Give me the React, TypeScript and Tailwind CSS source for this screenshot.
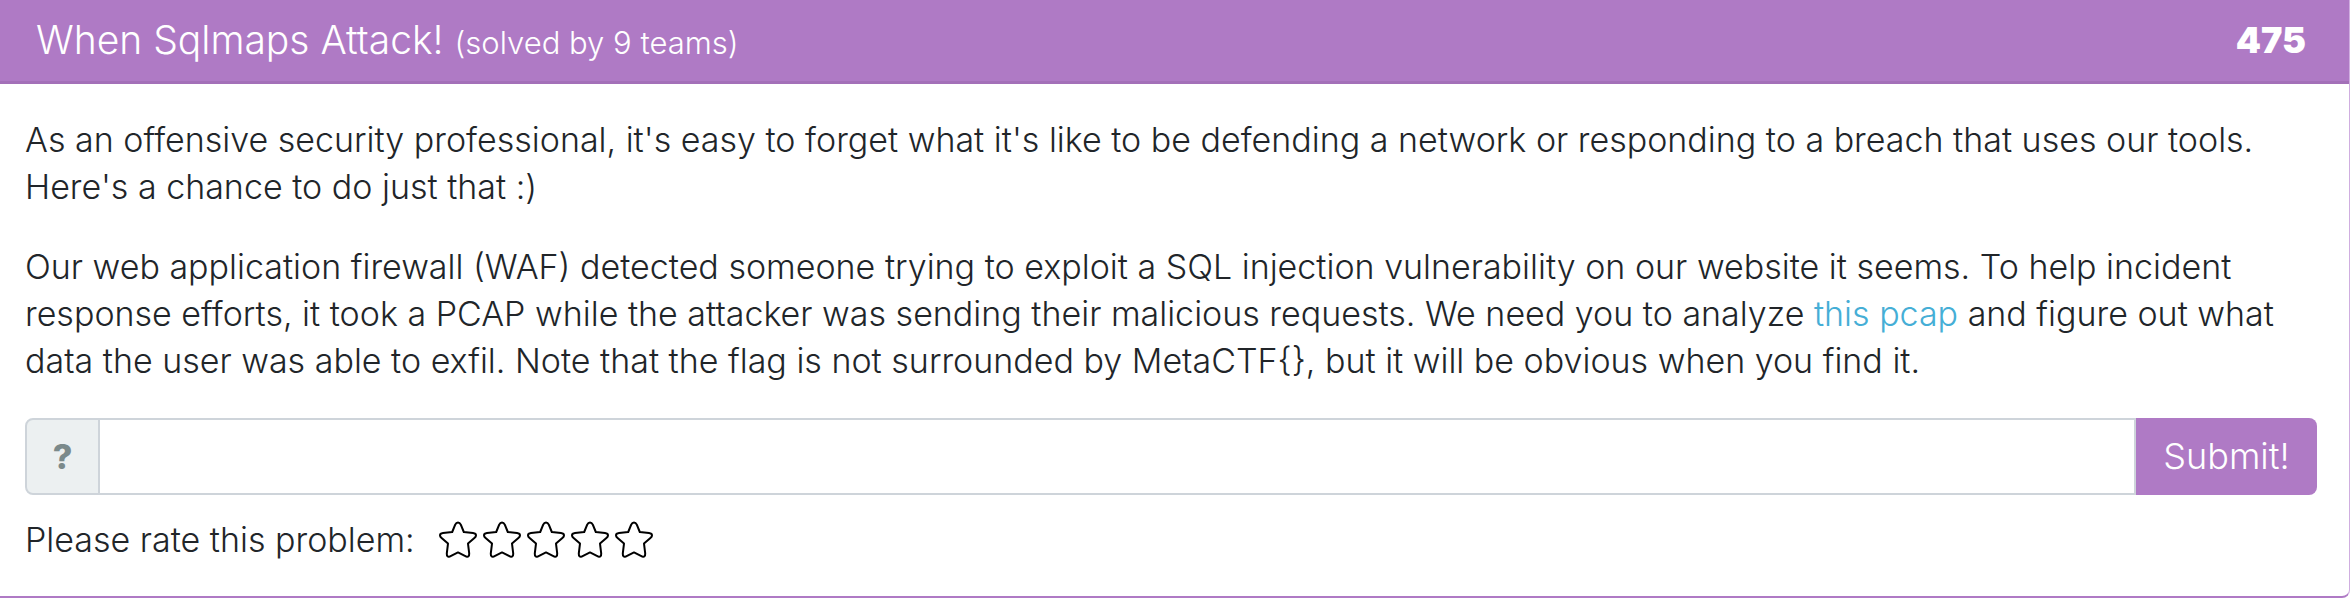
import { useState } from "react";

const STAR =
  "M19 1.5 Q20.8 1.5 21.8 3.6 L24.8 11 L34 12 Q37 12.4 37 14.4 Q37 15.6 35.4 17 L29 22.6 L30.2 32.4 Q30.3 36.4 27.4 35.6 L19 31.4 L10.6 35.6 Q7.7 36.4 7.8 32.4 L9 22.6 L2.6 17 Q1 15.6 1 14.4 Q1 12.4 4 12 L13.2 11 L16.2 3.6 Q17.2 1.5 19 1.5 Z";

function Rating() {
  const [rating, setRating] = useState(0);
  return (
    <div className="flex gap-[6px]">
      {[1, 2, 3, 4, 5].map((n) => (
        <button key={n} type="button" aria-label={`${n} stars`} onClick={() => setRating(n)}>
          <svg
            className="block h-[38px] w-[38px]"
            viewBox="0 0 38 38"
            fill={n <= rating ? "#000" : "none"}
            stroke="#000"
            strokeWidth="2"
            strokeLinejoin="round"
          >
            <path d={STAR} />
          </svg>
        </button>
      ))}
    </div>
  );
}

export default function App() {
  return (
    <div className="min-h-screen bg-white pb-[6px] font-['Inter',sans-serif] text-[34px] leading-[47px] font-light text-[#212529]">
      <section className="rounded-br-[8px] border-r border-b-2 border-r-[#d0aee0] border-b-[#af7ac5]">
        <header className="flex items-center justify-between border-b-[3px] border-[#a370b8] bg-[#af7ac5] pt-4 pr-[43px] pb-[17px] pl-9 text-white">
          <h1 className="text-[39px] leading-[48px]">
            When Sqlmaps Attack! <span className="text-[31px] leading-none">(solved by 9 teams)</span>
          </h1>
          <span className="text-[36px] leading-[48px] font-black">475</span>
        </header>
        <div className="pt-8 pr-8 pb-[33px] pl-[25px]">
          <p className="mb-[33px]">
            As an offensive security professional, it's easy to forget what it's like to be defending a network or
            responding to a breach that uses our tools. Here's a chance to do just that :)
          </p>
          <p className="mb-[34px]">
            Our web application firewall (WAF) detected someone trying to exploit a SQL injection vulnerability on our
            website it seems. To help incident response efforts, it took a PCAP while the attacker was sending their
            malicious requests. We need you to analyze{" "}
            <a href="#pcap" className="text-[#45aed6]">
              this pcap
            </a>
            {
              " and figure out what data the user was able to exfil. Note that the flag is not surrounded by MetaCTF{}, but it will be obvious when you find it."
            }
          </p>
          <form className="flex h-[77px]" onSubmit={(e) => e.preventDefault()}>
            <label
              htmlFor="flag"
              className="flex w-[75px] items-center justify-center rounded-l-[8px] border-2 border-[#ced4da] bg-[#ecf0f1] font-extrabold text-[#7b8a8b]"
            >
              ?
            </label>
            <input
              id="flag"
              type="text"
              className="min-w-0 flex-1 border-y-2 border-r-2 border-[#ced4da] px-6 outline-none"
            />
            <button type="submit" className="w-[181px] rounded-r-[8px] bg-[#af7ac5] text-[36px] text-white">
              Submit!
            </button>
          </form>
          <div className="mt-[21px] flex items-center gap-6">
            <span>Please rate this problem:</span>
            <Rating />
          </div>
        </div>
      </section>
    </div>
  );
}
